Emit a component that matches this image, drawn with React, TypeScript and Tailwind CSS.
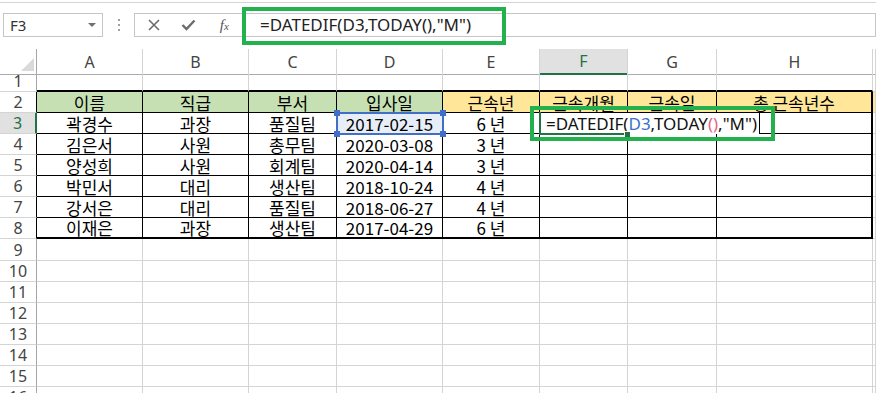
import React from "react";

const GRID = "grid grid-cols-[37px_106px_106px_88px_106px_97px_88px_89px_156px_1fr]";
const LETTERS = ["A", "B", "C", "D", "E", "F", "G", "H", "I"];

const DATA: Record<number, string[]> = {
  2: ["이름", "직급", "부서", "입사일", "근속년", "근속개월", "근속일", "총 근속년수"],
  3: ["곽경수", "과장", "품질팀", "2017-02-15", "6 년", "", "", ""],
  4: ["김은서", "사원", "총무팀", "2020-03-08", "3 년", "", "", ""],
  5: ["양성희", "사원", "회계팀", "2020-04-14", "3 년", "", "", ""],
  6: ["박민서", "대리", "생산팀", "2018-10-24", "4 년", "", "", ""],
  7: ["강서은", "대리", "품질팀", "2018-06-27", "4 년", "", "", ""],
  8: ["이재은", "과장", "생산팀", "2017-04-29", "6 년", "", "", ""],
};

function cellClass(r: number, c: number) {
  const inTable = r >= 2 && r <= 8 && c <= 7;
  let cls = "flex items-center justify-center border-r border-b ";
  if (inTable) {
    cls += "border-r-black border-b-black ";
    if (c === 7) cls += "border-r-2 ";
    if (r === 8) cls += "border-b-2 ";
  } else if (r === 1 && c <= 7) {
    cls += "border-r-[#d4d4d4] border-b-2 border-b-black ";
  } else {
    cls += "border-r-[#d4d4d4] border-b-[#d4d4d4] ";
  }
  if (r === 2) cls += c <= 3 ? "bg-[#c6e0b4] " : "bg-[#ffe699] ";
  if (r === 3 && c === 3) cls += "bg-[#e8eef8] text-[#1c2b4a] ";
  return cls;
}

function rowHeader(r: number) {
  if (r === 3)
    return "flex items-center justify-center border-b border-b-[#d4d4d4] border-r-2 border-r-[#217346] bg-[#e1e1e1] text-[#217346]";
  if (r >= 2 && r <= 8)
    return "flex items-center justify-center border-b border-b-[#d4d4d4] border-r border-r-black text-[#444]";
  return "flex items-center justify-center border-b border-b-[#d4d4d4] border-r border-r-[#a6a6a6] text-[#444]";
}

function Toolbar() {
  return (
    <div className="h-[49px] pt-[2px]">
      <div className="h-[47px] border-t border-[#d5d5d5] pt-[10px] flex items-start">
        {/* name box */}
        <div className="ml-[3px] w-[100px] h-[24px] border border-[#c6c6c6] flex items-center justify-between pl-[6px] pr-[6px]">
          <span className="font-['Noto_Sans',sans-serif] text-[15px] text-[#333]">F3</span>
          <span className="w-0 h-0 border-l-[4px] border-r-[4px] border-t-[4px] border-l-transparent border-r-transparent border-t-[#6f6f6f]" />
        </div>
        {/* grip */}
        <div className="w-[31px] h-[24px] flex flex-col items-center justify-center gap-[3px]">
          <span className="w-[2px] h-[2px] bg-[#a0a0a0]" />
          <span className="w-[2px] h-[2px] bg-[#a0a0a0]" />
          <span className="w-[2px] h-[2px] bg-[#a0a0a0]" />
        </div>
        {/* buttons */}
        <div className="w-[108px] h-[24px] border border-[#c6c6c6] border-r-0 flex items-center pl-[1px]">
          <div className="w-[36px] flex justify-center">
            <svg width="12" height="12" viewBox="0 0 12 12">
              <path d="M1 1 L11 11 M11 1 L1 11" stroke="#6b6b6b" strokeWidth="1.6" />
            </svg>
          </div>
          <div className="w-[36px] flex justify-center">
            <svg width="15" height="12" viewBox="0 0 15 12">
              <path d="M1.5 6 L5.5 10 L13.5 1.5" stroke="#6b6b6b" strokeWidth="2.4" fill="none" />
            </svg>
          </div>
          <div className="w-[36px] flex justify-center font-['Liberation_Serif',serif] italic text-[#555] text-[15px] leading-none">
            f<span className="text-[11px] relative top-[3px]">x</span>
          </div>
        </div>
        {/* formula */}
        <div className="flex-1 h-[24px] border border-[#c6c6c6] flex items-center pl-[17px] font-['Noto_Sans',sans-serif] text-[17px] text-[#222]">
          =DATEDIF(D3,TODAY(),"M")
        </div>
      </div>
    </div>
  );
}

export default function App() {
  const rows = Array.from({ length: 16 }, (_, i) => i + 1);
  return (
    <div className="relative w-[876px] h-[393px] overflow-hidden bg-white font-['Noto_Sans_CJK_KR',sans-serif]">
      <Toolbar />

      {/* column headers */}
      <div className={GRID + " h-[21px] text-[16px] font-['Noto_Sans',sans-serif]"}>
        <div className="relative border-r border-r-[#a6a6a6] border-b border-b-[#ababab]">
          <svg className="absolute right-[2px] bottom-[3px]" width="13" height="13" viewBox="0 0 13 13">
            <polygon points="13,0 13,13 0,13" fill="#dadada" />
          </svg>
        </div>
        {LETTERS.map((l) =>
          l === "F" ? (
            <div key={l} className="flex items-center justify-center bg-[#e1e1e1] border-r border-r-[#d4d4d4] border-b-2 border-b-[#217346] text-[#217346]">
              {l}
            </div>
          ) : (
            <div key={l} className="flex items-center justify-center border-r border-r-[#d4d4d4] border-b border-b-[#ababab] text-[#444]">
              {l === "I" ? "" : l}
            </div>
          )
        )}
      </div>

      {/* rows */}
      {rows.map((r) => (
        <div key={r} className={GRID + (r === 1 || r === 9 ? " h-[22px]" : " h-[21px]")}>
          <div className={rowHeader(r) + " font-['Noto_Sans',sans-serif] text-[16px] leading-none"}>{r}</div>
          {LETTERS.map((l, c) => (
            <div key={l} className={cellClass(r, c) + " text-[17px] leading-none text-black"}>
              {DATA[r] && c <= 7 ? DATA[r][c] : ""}
            </div>
          ))}
        </div>
      ))}

      {/* D3 reference highlight */}
      <div className="absolute left-[336px] top-[112px] w-[108px] h-[23px] border-2 border-[#3f6fc6]">
        <span className="absolute -left-[4px] -top-[4px] w-[6px] h-[6px] bg-[#3f6fc6]" />
        <span className="absolute -right-[4px] -top-[4px] w-[6px] h-[6px] bg-[#3f6fc6]" />
        <span className="absolute -left-[4px] -bottom-[4px] w-[6px] h-[6px] bg-[#3f6fc6]" />
        <span className="absolute -right-[4px] -bottom-[4px] w-[6px] h-[6px] bg-[#3f6fc6]" />
      </div>

      {/* F3 in-cell editor */}
      <div className="absolute left-[540px] top-[113px] w-[220px] h-[21px] bg-white border-r border-black flex items-center pl-[6px] text-[17px] text-[#111] font-['Noto_Sans',sans-serif] whitespace-nowrap">
        =DATEDIF(<span className="text-[#3a6fd0]">D3</span>,TODAY<span className="text-[#e06688]">()</span>,"M")
      </div>
      <div className="absolute left-[539px] top-[112px] w-[89px] h-[23px] border-l-2 border-b-2 border-[#217346]" />
      <div className="absolute left-[624px] top-[131px] w-[7px] h-[7px] bg-[#217346] border border-white" />

      {/* annotation boxes */}
      <div className="absolute left-[242px] top-[7px] w-[264px] h-[38px] border-4 border-[#22b14c]" />
      <div className="absolute left-[530px] top-[106px] w-[245px] h-[35px] border-4 border-[#22b14c]" />
    </div>
  );
}
